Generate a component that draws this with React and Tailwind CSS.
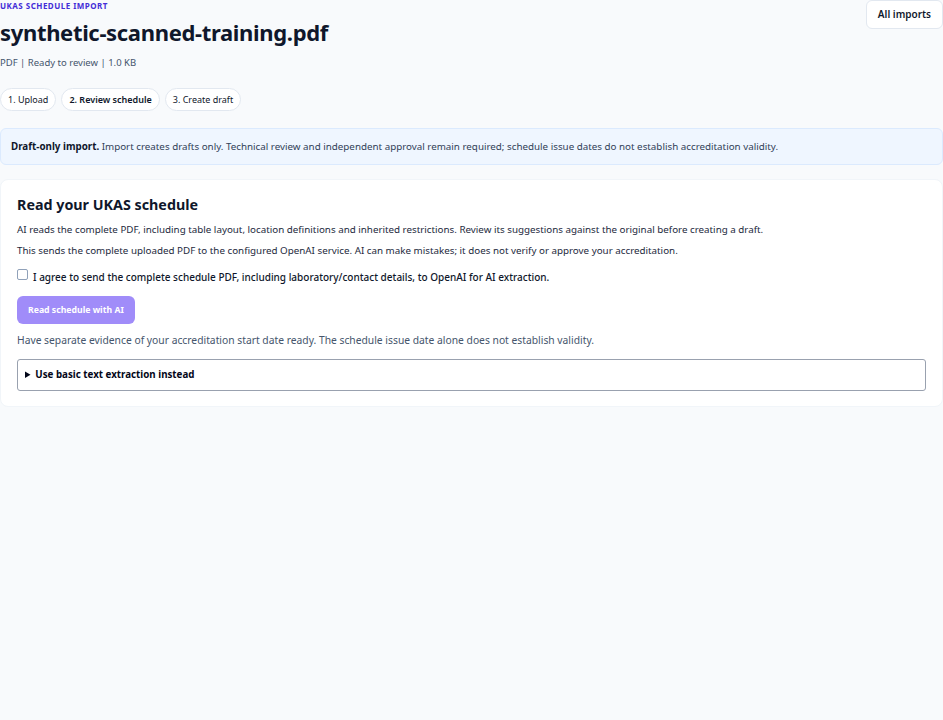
import React, { useState } from "react";

const steps = [
  { label: "1. Upload" },
  { label: "2. Review schedule", current: true },
  { label: "3. Create draft" },
];

const StepPill = ({ label, current }) => (
  <span
    className={
      "rounded-full border border-slate-200 bg-white px-[7px] py-[5px] text-[9px] leading-[11px] text-slate-900 " +
      (current ? "font-semibold" : "")
    }
  >
    {label}
  </span>
);

export default function App() {
  const [agreed, setAgreed] = useState(false);

  return (
    <div
      className="min-h-screen bg-slate-50 text-slate-800"
      style={{ fontFamily: '"Noto Sans", "Open Sans", sans-serif' }}
    >
      <header className="flex items-start justify-between">
        <div>
          <p className="text-[8px] font-bold uppercase leading-[12px] tracking-[0.06em] text-indigo-700">
            UKAS schedule import
          </p>
          <h1 className="mt-[6px] text-[22px] font-bold leading-[28px] tracking-[-0.015em] text-slate-900">
            synthetic-scanned-training.pdf
          </h1>
          <p className="mt-[11px] text-[9.5px] leading-[12px] text-slate-600">
            PDF | Ready to review | 1.0 KB
          </p>
        </div>
        <button className="rounded-md border border-slate-200 bg-white px-[11px] py-[7px] text-[10px] font-semibold leading-[13px] text-slate-900">
          All imports
        </button>
      </header>

      <nav className="mt-[19px] flex gap-[5px]">
        {steps.map((s) => (
          <StepPill key={s.label} {...s} />
        ))}
      </nav>

      <div className="mt-[17px] rounded-md border border-blue-100 bg-blue-50 px-[10px] py-[11px] text-[9.8px] leading-[13px] text-slate-700">
        <strong className="font-bold text-slate-900">Draft-only import.</strong> Import creates drafts
        only. Technical review and independent approval remain required; schedule issue dates do not
        establish accreditation validity.
      </div>

      <section className="mt-[14px] rounded-lg border border-slate-100 bg-white px-[16px] pb-[15px] pt-[15px]">
        <h2 className="text-[14.3px] font-bold leading-[20px] text-slate-900">Read your UKAS schedule</h2>
        <p className="mt-[8px] text-[9.8px] leading-[14px]">
          AI reads the complete PDF, including table layout, location definitions and inherited
          restrictions. Review its suggestions against the original before creating a draft.
        </p>
        <p className="mt-[7px] text-[9.8px] leading-[14px]">
          This sends the complete uploaded PDF to the configured OpenAI service. AI can make mistakes;
          it does not verify or approve your accreditation.
        </p>

        <label className="mt-[12px] flex items-start gap-[5px] text-[10px] font-medium leading-[14px] text-slate-900">
          <input
            type="checkbox"
            checked={agreed}
            onChange={(e) => setAgreed(e.target.checked)}
            className="mt-[-1px] h-[11px] w-[11px] shrink-0 appearance-none rounded-[2px] border border-slate-400 bg-white"
          />
          I agree to send the complete schedule PDF, including laboratory/contact details, to OpenAI for AI
          extraction.
        </label>

        <button
          disabled={!agreed}
          className="mt-[12px] rounded-md bg-[#a08cf9] px-[11px] py-[8px] text-[8.7px] font-bold leading-[12px] text-white"
        >
          Read schedule with AI
        </button>

        <p className="mt-[9px] text-[10.3px] leading-[14px] text-slate-600">
          Have separate evidence of your accreditation start date ready. The schedule issue date alone does
          not establish validity.
        </p>

        <details className="mt-[12px] rounded-[3px] border border-gray-400 bg-white px-[7px] py-[8px]">
          <summary className="cursor-pointer text-[9.75px] font-bold leading-[14px] text-slate-950">
            Use basic text extraction instead
          </summary>
        </details>
      </section>
    </div>
  );
}
